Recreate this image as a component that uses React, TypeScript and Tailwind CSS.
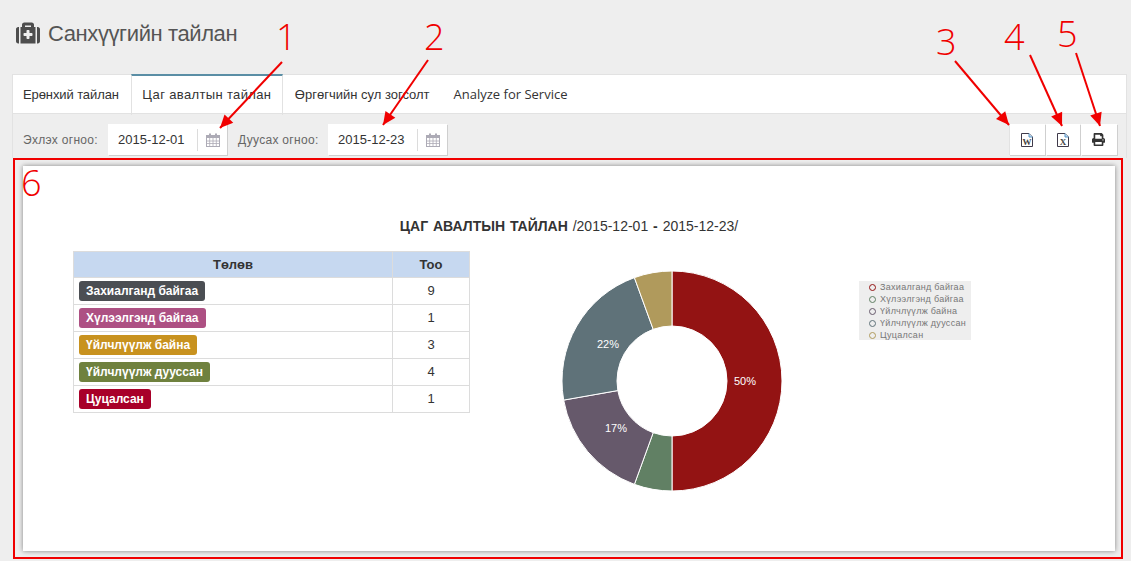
import { FaMedkit, FaPrint } from "react-icons/fa";

const tabs = [
  { label: "Ерөнхий тайлан", cls: "pl-[9px] pr-[12px] tracking-[-0.1px]" },
  { label: "Цаг авалтын тайлан", cls: "" },
  { label: "Өргөгчийн сул зогсолт", cls: "px-[12px]" },
  { label: "Analyze for Service", cls: "px-[12px] font-['Open_Sans',sans-serif] text-[12px]" },
];

const rows = [
  { label: "Захиалганд байгаа", count: 9, color: "bg-[#4b4e53]" },
  { label: "Хүлээлгэнд байгаа", count: 1, color: "bg-[#ad5083]" },
  { label: "Үйлчлүүлж байна", count: 3, color: "bg-[#c8921f]" },
  { label: "Үйлчлүүлж дууссан", count: 4, color: "bg-[#6f813e]" },
  { label: "Цуцалсан", count: 1, color: "bg-[#a80029]" },
];

const slices = [
  { label: "Захиалганд байгаа", value: 9, color: "#931313", text: "50%", tx: 73, ty: 0 },
  { label: "Хүлээлгэнд байгаа", value: 1, color: "#618064" },
  { label: "Үйлчлүүлж байна", value: 3, color: "#66596b", text: "17%", tx: -56, ty: 47 },
  { label: "Үйлчлүүлж дууссан", value: 4, color: "#5f7279", text: "22%", tx: -64, ty: -37 },
  { label: "Цуцалсан", value: 1, color: "#b09a5c" },
];

const arrows = [
  { x1: 282, y1: 62, x2: 220, y2: 128 },
  { x1: 428, y1: 60, x2: 383, y2: 125 },
  { x1: 955, y1: 61, x2: 1009, y2: 125 },
  { x1: 1030, y1: 55, x2: 1062, y2: 126 },
  { x1: 1076, y1: 53, x2: 1100, y2: 126 },
];

const numerals = [
  { n: "1", cls: "left-[276px] top-[15px]" },
  { n: "2", cls: "left-[424px] top-[15px]" },
  { n: "3", cls: "left-[936px] top-[20px]" },
  { n: "4", cls: "left-[1004px] top-[15px]" },
  { n: "5", cls: "left-[1057px] top-[12px]" },
  { n: "6", cls: "left-[21px] top-[161px]" },
];

function CalendarIcon() {
  return (
    <svg width="14" height="14" viewBox="0 0 14 14" className="text-[#adabb6]">
      <rect x="0.5" y="2.5" width="13" height="11" fill="none" stroke="currentColor" />
      <rect x="0.5" y="2" width="13" height="3" fill="currentColor" />
      <rect x="3" y="0.5" width="2" height="3" fill="currentColor" />
      <rect x="9" y="0.5" width="2" height="3" fill="currentColor" />
      <path d="M0 8h14M0 10.5h14M3.7 5v8M7 5v8M10.3 5v8" stroke="currentColor" strokeWidth="0.8" />
    </svg>
  );
}

function DateField({ value }: { value: string }) {
  return (
    <div className="flex h-[31px] w-[119px] items-center bg-white shadow-[1px_1px_0_#cfcfcf]">
      <span className="w-[89px] pl-[10px] pt-px text-[13px] text-[#333]">{value}</span>
      <span className="h-[22px] w-px bg-[#dcdcdc]" />
      <span className="flex flex-1 justify-center">
        <CalendarIcon />
      </span>
    </div>
  );
}

function FileIcon({ letter }: { letter: string }) {
  return (
    <svg width="12" height="14" viewBox="0 0 12 14">
      <path d="M0.5 0.5h7.5l3.5 3.5v9.5h-11z" fill="white" stroke="#3f3a4a" />
      <path d="M8 0.5v3.5h3.5" fill="#bcdcf5" stroke="#5a94c4" />
      <text x="6" y="11.5" textAnchor="middle" fontSize="9" fontWeight="bold" fontFamily="Liberation Serif, serif" fill="#444">
        {letter}
      </text>
    </svg>
  );
}

function Donut() {
  const total = slices.reduce((s, x) => s + x.value, 0);
  const cx = 112;
  const cy = 112;
  const R = 110;
  const r = 55;
  let acc = 0;
  return (
    <svg width="224" height="224" viewBox="0 0 224 224">
      {slices.map((s) => {
        const a0 = (acc / total) * 2 * Math.PI;
        acc += s.value;
        const a1 = (acc / total) * 2 * Math.PI;
        const large = a1 - a0 > Math.PI ? 1 : 0;
        const p = (rad: number, a: number) =>
          `${cx + rad * Math.sin(a)} ${cy - rad * Math.cos(a)}`;
        return (
          <path
            key={s.label}
            d={`M${p(R, a0)}A${R} ${R} 0 ${large} 1 ${p(R, a1)}L${p(r, a1)}A${r} ${r} 0 ${large} 0 ${p(r, a0)}Z`}
            fill={s.color}
            stroke="white"
            strokeWidth="1"
          />
        );
      })}
      {slices.map((s) =>
        s.text ? (
          <text
            key={s.text}
            x={cx + (s.tx ?? 0)}
            y={cy + (s.ty ?? 0) + 4}
            textAnchor="middle"
            fontSize="11"
            fill="white"
            fontFamily="Liberation Sans, sans-serif"
          >
            {s.text}
          </text>
        ) : null
      )}
    </svg>
  );
}

export default function App() {
  return (
    <div className="relative h-[561px] w-[1131px] overflow-hidden bg-[#eeeeee] font-['Liberation_Sans',Arial,sans-serif]">
      <header className="flex h-[74px] items-start pl-[16px] pt-[21px]">
        <FaMedkit className="text-[#4d4d4d]" size={24} />
        <h1 className="ml-[8px] text-[22px] leading-[26px] tracking-[-0.4px] text-[#555]">Санхүүгийн тайлан</h1>
      </header>

      <div className="ml-[12px] mr-[4px] border-x border-[#e2e2e2]">
        <nav className="flex h-[40px] border-y border-[#e2e2e2] bg-white pl-px">
          {tabs.map((t, i) =>
            i === 1 ? (
              <span
                key={t.label}
                className="-mt-px flex h-[41px] w-[152px] items-center justify-center border-x border-t-2 border-x-[#e2e2e2] border-t-[#5a8ea5] pb-[2px] text-[13px] tracking-[0.35px] text-[#333]"
              >
                {t.label}
              </span>
            ) : (
              <span key={t.label} className={`flex items-center pt-px text-[13px] text-[#333] ${t.cls}`}>
                {t.label}
              </span>
            )
          )}
        </nav>

        <div className="flex h-[44px] items-start pl-[10px] pr-[9px] pt-[10px]">
          <span className="w-[85px] pt-[7px] text-[12px] tracking-[0.3px] text-[#666]">Эхлэх огноо:</span>
          <DateField value="2015-12-01" />
          <span className="ml-[11px] w-[90px] pt-[7px] text-[12px] tracking-[0.3px] text-[#666]">Дуусах огноо:</span>
          <DateField value="2015-12-23" />
          <div className="ml-auto flex">
            <button className="flex h-[31px] w-[36px] items-center justify-center border-l border-[#e2e2e2] bg-white pr-px shadow-[1px_1px_0_#cfcfcf]">
              <FileIcon letter="W" />
            </button>
            <button className="ml-px flex h-[31px] w-[34px] items-center justify-center bg-white shadow-[1px_1px_0_#cfcfcf]">
              <FileIcon letter="X" />
            </button>
            <button className="ml-px flex h-[31px] w-[36px] items-center justify-center bg-white pr-[2px] shadow-[1px_1px_0_#cfcfcf]">
              <FaPrint className="text-[#333]" size={13} />
            </button>
          </div>
        </div>
      </div>

      <div className="ml-[13px] h-[401px] w-[1110px] border-2 border-[#f00000] pb-[5px] pl-[8px] pr-[6px] pt-[6px]">
        <section className="h-[385px] bg-white shadow-[0_0_5px_rgba(0,0,0,0.45)]">
          <h2 className="pt-[52px] text-center text-[14px] leading-[16px] text-[#333] [word-spacing:1px]">
            <b>ЦАГ АВАЛТЫН ТАЙЛАН</b> /2015-12-01 <b>-</b> 2015-12-23/
          </h2>
          <div className="flex pl-[50px] pt-[17px]">
            <table className="h-fit w-[397px] border-collapse text-[13px] text-[#333]">
              <thead>
                <tr className="h-[26px] bg-[#c6d8f0]">
                  <th className="w-[319px] border border-[#dcdcdc] font-bold">Төлөв</th>
                  <th className="border border-[#dcdcdc] font-bold">Тоо</th>
                </tr>
              </thead>
              <tbody>
                {rows.map((r) => (
                  <tr key={r.label} className="h-[27px]">
                    <td className="border border-[#dcdcdc] pl-[5px]">
                      <span className={`inline-block rounded-[3px] px-[7px] text-[12px] font-bold leading-[20px] text-white ${r.color}`}>
                        {r.label}
                      </span>
                    </td>
                    <td className="border border-[#dcdcdc] text-center">{r.count}</td>
                  </tr>
                ))}
              </tbody>
            </table>
            <div className="ml-[90px] mt-[18px]">
              <Donut />
            </div>
            <ul className="ml-[75px] mt-[30px] h-[59px] w-[112px] bg-[#eeeeee] pl-[10px] text-[9px] leading-[12px] tracking-[0.3px] text-[#777]">
              {slices.map((s) => (
                <li key={s.label} className="flex items-center gap-[4px]">
                  <span className="h-[7px] w-[7px] rounded-full border-[1.5px]" style={{ borderColor: s.color }} />
                  {s.label}
                </li>
              ))}
            </ul>
          </div>
        </section>
      </div>

      {/* red callouts on top of the screenshot */}
      <svg className="absolute left-0 top-0" width="1131" height="561">
        {arrows.map((a) => {
          const ang = Math.atan2(a.y2 - a.y1, a.x2 - a.x1);
          const pt = (l: number, off: number) =>
            `${a.x2 - l * Math.cos(ang) - off * Math.sin(ang)},${a.y2 - l * Math.sin(ang) + off * Math.cos(ang)}`;
          return (
            <g key={a.x1}>
              <line x1={a.x1} y1={a.y1} x2={a.x2} y2={a.y2} stroke="#f00000" strokeWidth="2" />
              <polygon points={`${a.x2},${a.y2} ${pt(13, 6)} ${pt(13, -6)}`} fill="#f00000" />
            </g>
          );
        })}
      </svg>
      {numerals.map((x) => (
        <span key={x.n} className={`absolute font-['Open_Sans',sans-serif] text-[36px] font-light leading-[44px] text-[#f00000] ${x.cls}`}>
          {x.n}
        </span>
      ))}
    </div>
  );
}
